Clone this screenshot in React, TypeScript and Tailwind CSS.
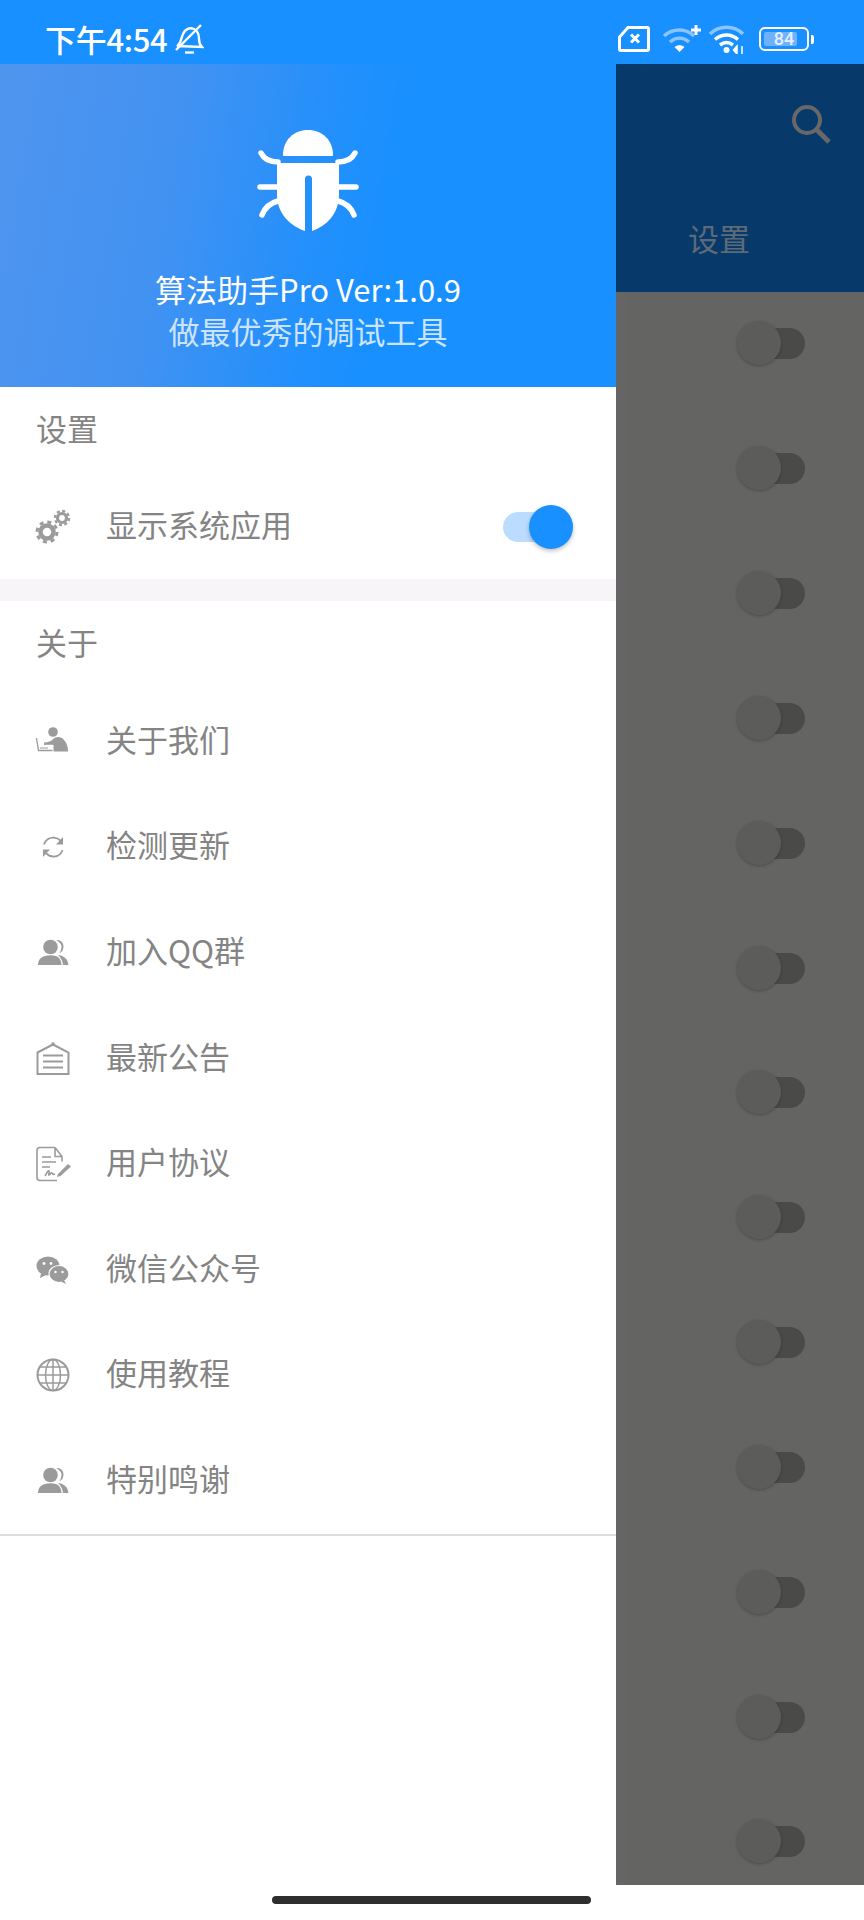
import type { ReactNode } from "react";

const font = { cjk: "font-['Noto_Sans_CJK_SC','Noto_Sans',sans-serif]" };

function Icon({ children }: { children: ReactNode }) {
	return (
		<svg viewBox="0 0 36 36" className="w-9 h-9 shrink-0" fill="#9b9b9b">
			{children}
		</svg>
	);
}

function Gears() {
	return (
		<Icon>
			<circle cx="12" cy="23" r="6.5" fill="none" stroke="#9b9b9b" strokeWidth="4.5" />
			<circle cx="12" cy="23" r="10" fill="none" stroke="#9b9b9b" strokeWidth="3" strokeDasharray="4 3.85" />
			<circle cx="27" cy="9" r="4.5" fill="none" stroke="#9b9b9b" strokeWidth="3.2" />
			<circle cx="27" cy="9" r="7" fill="none" stroke="#9b9b9b" strokeWidth="2.4" strokeDasharray="3 2.5" />
		</Icon>
	);
}

function Laptop() {
	return (
		<Icon>
			<circle cx="18" cy="8" r="4.8" />
			<path d="M9 18.500c4-.2 7-1 9-3.200 3-3 8-3 11 .6 3 3 4 7 4 11.600H18.500v-6.500C15 20.500 12 21 9 21z" />
			<path d="M1.500 14l2 12.500h14" fill="none" stroke="#9b9b9b" strokeWidth="1.300" />
			<path d="M5 24h8" fill="none" stroke="#9b9b9b" strokeWidth="1" />
		</Icon>
	);
}

function Refresh() {
	return (
		<Icon>
			<g fill="none" stroke="#9b9b9b" strokeWidth="1.800">
				<path d="M9 15.500C10.500 10.500 15 8.300 19 8.700c2.500.2 4.800 1.300 6.500 3" />
				<path d="M27.500 21c-1.500 4.800-5.800 6.800-9.700 6.500-2.500-.2-4.800-1.300-6.600-3" />
			</g>
			<path d="M28 8v7.500h-7z" />
			<path d="M8 28v-7.500h7z" />
		</Icon>
	);
}

function Users() {
	return (
		<Icon>
			<path d="M21 5.500c3.600-1.300 7.500 1 7.500 6 0 3.200-1.500 5.800-4.200 6.500 1-1.200 2.200-3.500 2.200-6.500 0-2.500-2.300-5-5.500-6z" />
			<circle cx="15.500" cy="12" r="7.300" />
			<path d="M3 30c0-6 4-9.800 12.500-9.800S26 24 26.500 30z" />
			<path d="M23 20c5 .5 10 3.500 10.500 10h-5.500c-.3-3.500-2-7-5-10z" />
		</Icon>
	);
}

function Notice() {
	return (
		<Icon>
			<g fill="none" stroke="#9b9b9b" strokeWidth="2">
				<path d="M2.500 11.500L18 3.500l15.500 8v21.500h-31z" />
				<path d="M8 14.500h20M8 20.500h20M8 26.500h20" />
			</g>
			<circle cx="18" cy="3" r="1.800" />
		</Icon>
	);
}

function Doc() {
	return (
		<Icon>
			<g fill="none" stroke="#9b9b9b" strokeWidth="1.600">
				<path d="M20 1.500H5a3 3 0 0 0-3 3v27a3 3 0 0 0 3 3h17" />
				<path d="M20 1.500l7 9v5M20 1.500v9h7" />
				<path d="M7 11h9M7 16h14M7 21h8" />
				<path d="M10 30c2-3 3-6 4-5s-1 4 0 4 2-3 3-2 1 2 3 1" />
			</g>
			<path d="M23 28l10-10 3 2.500-10.500 9.500-3.500 1z" />
		</Icon>
	);
}

function Wechat() {
	return (
		<Icon>
			<ellipse cx="13" cy="14" rx="11.500" ry="9.500" />
			<path d="M6 21l-1 5 6-3z" />
			<ellipse cx="24" cy="22" rx="10" ry="8.500" fill="#9b9b9b" stroke="#fff" strokeWidth="1.200" />
			<path d="M29 28l2 4-5-2.500z" />
			<circle cx="9" cy="11.500" r="1.400" fill="#fff" />
			<circle cx="16" cy="11.500" r="1.400" fill="#fff" />
			<circle cx="20.500" cy="20" r="1.200" fill="#fff" />
			<circle cx="27.500" cy="20" r="1.200" fill="#fff" />
		</Icon>
	);
}

function Globe() {
	return (
		<Icon>
			<g fill="none" stroke="#9b9b9b">
				<circle cx="18" cy="18" r="15.500" strokeWidth="2" />
				<ellipse cx="18" cy="18" rx="7.500" ry="15.500" strokeWidth="1.500" />
				<path d="M18 2.500v31M2.500 18h31M5 10h26M5 26h26" strokeWidth="1.500" />
			</g>
		</Icon>
	);
}

function Bug() {
	return (
		<svg viewBox="0 0 102 102" className="w-[102px] h-[102px]" fill="#fff">
			<path d="M26 25C26 10 37 0 51 0s25 10 25 25c0 .6-.4 1-1 1H27c-.6 0-1-.4-1-1z" />
			<path d="M20 33h62v32c0 18-12 31-27 36V49a3.500 3.500 0 0 0-7 0v52C33 96 20 83 20 65z" />
			<g fill="none" stroke="#fff" strokeWidth="5.500" strokeLinecap="round">
				<path d="M4 23c3 6 8 9 17 9M98 23c-3 6-8 9-17 9" />
				<path d="M3 57h18M99 57H81" />
				<path d="M5 85c3-8 8-12 16-14M97 85c-3-8-8-12-16-14" />
			</g>
		</svg>
	);
}

function StatusBar() {
	return (
		<div className="h-16 bg-[#1890ff] flex items-center pt-[14px] pl-[45px] pr-[50px] text-white">
			<span className={`${font.cjk} text-[31px] leading-none font-medium tracking-[-0.3px] mb-[2px]`}>
				下午4:54
			</span>
			<svg viewBox="0 0 30 30" className="w-[30px] h-[30px] ml-[7px]" fill="none" stroke="#fff" strokeWidth="2.400">
				<path d="M3 22c4-2 4-8 6-12 2-5 7-7 11-5s5 7 5 10c0 3 1 6 3 8z" />
				<path d="M11 28.500h9" />
				<path d="M27 1L2 26" />
			</svg>
			<div className="ml-auto flex items-center">
				<svg viewBox="0 0 32 26" className="w-8 h-[26px]" fill="none" stroke="#fff" strokeWidth="3">
					<path d="M10 1.500h19a1.500 1.500 0 0 1 1.500 1.500v20a1.500 1.500 0 0 1-1.500 1.500H3a1.500 1.500 0 0 1-1.500-1.500V11z" />
					<path d="M13 8.500l8 8M21 8.500l-8 8" />
				</svg>
				<svg viewBox="0 0 40 30" className="w-10 h-[30px] ml-[12px]" fill="none">
					<path d="M2 12c9-8 22-8 30 0" stroke="#8cc4ff" strokeWidth="3.500" />
					<path d="M8 18c6-5 13-5 19 0" stroke="#8cc4ff" strokeWidth="3.500" />
					<path d="M12.500 23c3-2.500 7-2.500 10 0L17.500 28z" fill="#fff" />
					<path d="M34 1v10M29 6h10" stroke="#fff" strokeWidth="3" />
				</svg>
				<svg viewBox="0 0 38 30" className="w-[38px] h-[30px] ml-[7px]" fill="none">
					<path d="M1 10c9-9 24-9 33 0" stroke="#8cc4ff" strokeWidth="3.500" />
					<path d="M6 15.500c7-6 16-6 23 0" stroke="#fff" strokeWidth="3.500" />
					<path d="M11 21c4-3 9-3 13 0" stroke="#fff" strokeWidth="3.500" />
					<circle cx="17.500" cy="26" r="3" fill="#fff" />
					<path d="M28 22l-3.500 4 3.500 4zM33 22v8" fill="#fff" stroke="#fff" strokeWidth="1.500" />
				</svg>
				<div className="ml-[12px] flex items-center">
					<div className="relative w-[50px] h-[24px] rounded-[6px] border-2 border-white p-[3px]">
						<div className="h-full w-[33px] bg-[#6fb1fb] rounded-[2px]" />
						<span className="absolute inset-0 flex items-center justify-center font-['Roboto',sans-serif] font-medium text-[18px] leading-none text-[#e4f0ff]">
							84
						</span>
					</div>
					<div className="w-[3px] h-[9px] bg-white rounded-r-[2px] ml-[2px]" />
				</div>
			</div>
		</div>
	);
}

function SectionTitle({ children }: { children: ReactNode }) {
	return (
		<div className="h-[88px] flex items-center pl-[36px] text-[31px] leading-none text-[#848484]">
			<span className="mb-[7px]">{children}</span>
		</div>
	);
}

const items = [
	{ label: "关于我们", icon: <Laptop /> },
	{ label: "检测更新", icon: <Refresh /> },
	{ label: "加入QQ群", icon: <Users /> },
	{ label: "最新公告", icon: <Notice /> },
	{ label: "用户协议", icon: <Doc /> },
	{ label: "微信公众号", icon: <Wechat /> },
	{ label: "使用教程", icon: <Globe /> },
	{ label: "特别鸣谢", icon: <Users /> },
];

function Drawer() {
	return (
		<aside className={`w-[616px] shrink-0 bg-white ${font.cjk}`}>
			<div className="h-[323px] flex flex-col items-center bg-[linear-gradient(100deg,#4f95ee_0%,#4292f2_28%,#2490fb_50%,#1890ff_62%)] text-white">
				<div className="mt-[66px]">
					<Bug />
				</div>
				<div className="mt-[36px] text-[31px] leading-[42px]">算法助手Pro Ver:1.0.9</div>
				<div className="text-[31px] leading-[41px] text-[#cde4ff]">做最优秀的调试工具</div>
			</div>

			<SectionTitle>设置</SectionTitle>
			<div className="h-[104px] flex items-center pl-[35px] text-[31px] leading-none text-[#848484]">
				<Gears />
				<span className="ml-[35px] mb-[7px]">显示系统应用</span>
				<div className="relative ml-auto mr-[55px] w-[58px] h-[30px] rounded-full bg-[#bbdcff]">
					<div className="absolute right-[-12px] top-[-7px] w-11 h-11 rounded-full bg-[#1890ff] shadow-[0_2px_4px_rgba(0,0,0,0.25)]" />
				</div>
			</div>
			<div className="h-[22px] bg-[#f8f5f8]" />

			<SectionTitle>关于</SectionTitle>
			{items.map((item) => (
				<div
					key={item.label}
					className="h-[105.6px] flex items-center pl-[35px] text-[31px] leading-none text-[#848484]"
				>
					{item.icon}
					<span className="ml-[35px] mb-[7px]">{item.label}</span>
				</div>
			))}
			<div className="h-[2px] bg-[#dddddd]" />
		</aside>
	);
}

function DimToggle() {
	return (
		<div className="h-[124.83px] shrink-0 flex items-center">
			<div className="relative ml-[128px] w-[61px] h-[31px] rounded-full bg-[#4a4b49]">
				<div className="absolute left-[-7px] top-[-7px] w-11 h-11 rounded-full bg-[#5c5d5b] shadow-[0_1px_3px_rgba(0,0,0,0.25)]" />
			</div>
		</div>
	);
}

function DimmedPage() {
	return (
		<div className={`flex-1 flex flex-col h-[1821px] ${font.cjk}`}>
			<div className="h-[228px] bg-[#08396b] flex flex-col items-center">
				<div className="self-end mr-[33px] mt-[40px]">
					<svg viewBox="0 0 40 40" className="w-10 h-10" fill="none" stroke="#686868" strokeWidth="4">
						<circle cx="16" cy="16" r="13" />
						<path d="M25.500 25.500L38 38" strokeWidth="5" />
					</svg>
				</div>
				<div className="mt-[78px] ml-[-42px] text-[31px] leading-none text-[#5d6b77]">设置</div>
			</div>
			<div className="flex-1 overflow-hidden bg-[linear-gradient(90deg,#676567,#646563_12px)]">
				<div className="flex flex-col mt-[-10.500px]">
					{Array.from({ length: 13 }, (_, i) => (
						<DimToggle key={i} />
					))}
				</div>
			</div>
		</div>
	);
}

export default function App() {
	return (
		<div className="relative w-[864px] h-[1920px] overflow-hidden bg-white">
			<StatusBar />
			<div className="flex">
				<Drawer />
				<DimmedPage />
			</div>
			{/* home indicator */}
			<div className="absolute left-[272px] top-[1896px] w-[319px] h-2 rounded-full bg-[#2e2e2e]" />
		</div>
	);
}
